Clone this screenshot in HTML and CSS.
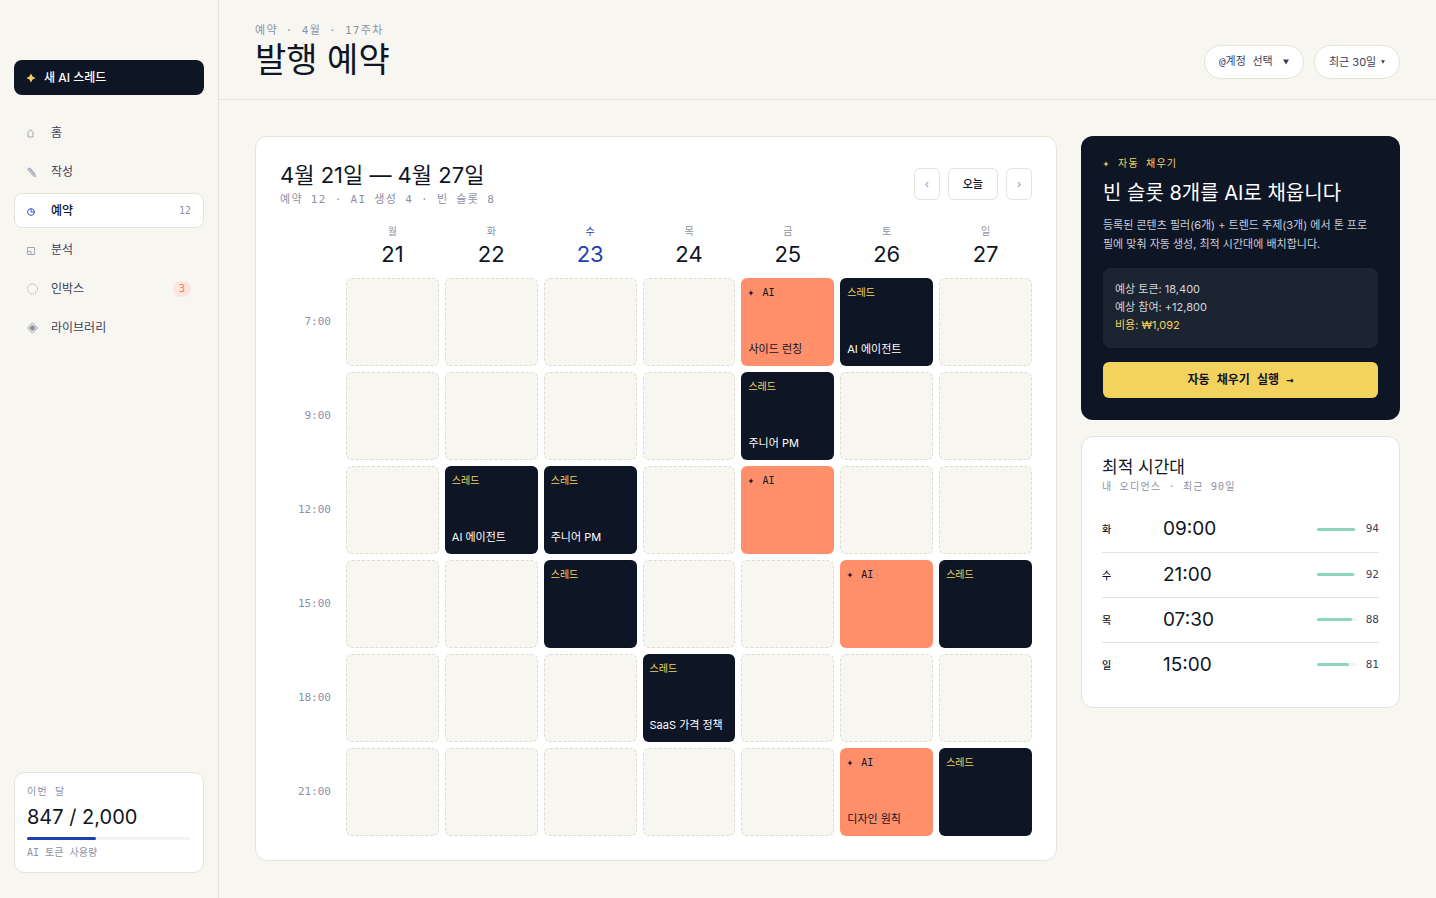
FILE: index.html
```html
<!DOCTYPE html>
<html lang="ko">
<head>
    <meta charset="UTF-8">
    <meta name="viewport" content="width=device-width, initial-scale=1.0">
    <title>발행 예약</title>
    <link rel="stylesheet" href="styles.css">
</head>
<body>
    <aside class="sidebar">
        <button class="new-thread">
            <svg class="spark" viewBox="0 0 12 12"><path d="M6 0.5 7.9 4.1 11.5 6 7.9 7.9 6 11.5 4.1 7.9 0.5 6 4.1 4.1Z"/></svg>
            새 AI 스레드
        </button>
        <nav class="nav">
            <a href="#" class="nav-item">
                <svg class="nav-icon" viewBox="0 0 12 12"><path d="M1 10V5.500L3.500 2.500 6 5.500V10Z"/></svg>
                <span>홈</span>
            </a>
            <a href="#" class="nav-item">
                <svg class="nav-icon" viewBox="0 0 12 12"><path d="M1 2.500 3 2 8 8 8.500 10.500 6 9.700 1.200 4ZM2 3.200 7 9M3 2.800 7.600 8.400"/></svg>
                <span>작성</span>
            </a>
            <a href="#" class="nav-item active">
                <svg class="nav-icon" viewBox="0 0 12 12"><circle cx="4" cy="7" r="3.400"/><path d="M4 3.600V7H7.400"/></svg>
                <span>예약</span>
                <span class="count">12</span>
            </a>
            <a href="#" class="nav-item">
                <svg class="nav-icon" viewBox="0 0 12 12"><path d="M0.500 3.500H7.500V10.500H0.500ZM0.500 7.500H4V10.500"/></svg>
                <span>분석</span>
            </a>
            <a href="#" class="nav-item">
                <svg class="nav-icon" viewBox="0 0 12 12"><circle class="dotted" cx="5.500" cy="6" r="5"/></svg>
                <span>인박스</span>
                <span class="badge">3</span>
            </a>
            <a href="#" class="nav-item">
                <svg class="nav-icon" viewBox="0 0 12 12"><path d="M5.500 0.800 10.700 6 5.500 11.200 0.500 6Z"/><path class="solid" d="M5.500 3 8.500 6 5.500 9 2.500 6Z"/></svg>
                <span>라이브러리</span>
            </a>
        </nav>
        <div class="usage">
            <p class="usage-label">이번 달</p>
            <p class="usage-value">847 / 2,000</p>
            <div class="bar usage-bar"><div class="bar-fill" style="width: 42%"></div></div>
            <p class="usage-note">AI 토큰 사용량</p>
        </div>
    </aside>

    <main class="main">
        <header class="topbar">
            <div>
                <p class="eyebrow">예약 · 4월 · 17주차</p>
                <h1>발행 예약</h1>
            </div>
            <div class="filters">
                <label class="pill mono">
                    <select aria-label="계정"><option>@계정 선택</option></select>
                    <svg class="caret" viewBox="0 0 6 6"><path d="M0 0.500H6L3 5.500Z"/></svg>
                </label>
                <label class="pill">
                    <select aria-label="기간"><option>최근 30일</option></select>
                    <svg class="caret small" viewBox="0 0 6 6"><path d="M0 0.500H6L3 5.500Z"/></svg>
                </label>
            </div>
        </header>

        <div class="content">
            <section class="card calendar">
                <div class="calendar-head">
                    <div>
                        <h2>4월 21일 — 4월 27일</h2>
                        <p class="eyebrow">예약 12 · AI 생성 4 · 빈 슬롯 8</p>
                    </div>
                    <div class="pager">
                        <button class="arrow" aria-label="이전 주">‹</button>
                        <button class="today">오늘</button>
                        <button class="arrow" aria-label="다음 주">›</button>
                    </div>
                </div>
                <table class="week">
                    <thead>
                        <tr>
                            <td></td>
                            <th>월<b>21</b></th>
                            <th>화<b>22</b></th>
                            <th class="now">수<b>23</b></th>
                            <th>목<b>24</b></th>
                            <th>금<b>25</b></th>
                            <th>토<b>26</b></th>
                            <th>일<b>27</b></th>
                        </tr>
                    </thead>
                    <tbody>
                        <tr>
                            <th>7:00</th>
                            <td></td>
                            <td></td>
                            <td></td>
                            <td></td>
                            <td class="slot ai"><small><svg class="spark" viewBox="0 0 12 12"><path d="M6 0.5 7.6 4.4 11.5 6 7.6 7.6 6 11.5 4.4 7.6 0.5 6 4.4 4.4Z"/></svg>AI</small><span>사이드 런칭</span></td>
                            <td class="slot thread"><small>스레드</small><span>AI 에이전트</span></td>
                            <td></td>
                        </tr>
                        <tr>
                            <th>9:00</th>
                            <td></td>
                            <td></td>
                            <td></td>
                            <td></td>
                            <td class="slot thread"><small>스레드</small><span>주니어 PM</span></td>
                            <td></td>
                            <td></td>
                        </tr>
                        <tr>
                            <th>12:00</th>
                            <td></td>
                            <td class="slot thread"><small>스레드</small><span>AI 에이전트</span></td>
                            <td class="slot thread"><small>스레드</small><span>주니어 PM</span></td>
                            <td></td>
                            <td class="slot ai"><small><svg class="spark" viewBox="0 0 12 12"><path d="M6 0.5 7.6 4.4 11.5 6 7.6 7.6 6 11.5 4.4 7.6 0.5 6 4.4 4.4Z"/></svg>AI</small></td>
                            <td></td>
                            <td></td>
                        </tr>
                        <tr>
                            <th>15:00</th>
                            <td></td>
                            <td></td>
                            <td class="slot thread"><small>스레드</small></td>
                            <td></td>
                            <td></td>
                            <td class="slot ai"><small><svg class="spark" viewBox="0 0 12 12"><path d="M6 0.5 7.6 4.4 11.5 6 7.6 7.6 6 11.5 4.4 7.6 0.5 6 4.4 4.4Z"/></svg>AI</small></td>
                            <td class="slot thread"><small>스레드</small></td>
                        </tr>
                        <tr>
                            <th>18:00</th>
                            <td></td>
                            <td></td>
                            <td></td>
                            <td class="slot thread"><small>스레드</small><span>SaaS 가격 정책</span></td>
                            <td></td>
                            <td></td>
                            <td></td>
                        </tr>
                        <tr>
                            <th>21:00</th>
                            <td></td>
                            <td></td>
                            <td></td>
                            <td></td>
                            <td></td>
                            <td class="slot ai"><small><svg class="spark" viewBox="0 0 12 12"><path d="M6 0.5 7.6 4.4 11.5 6 7.6 7.6 6 11.5 4.4 7.6 0.5 6 4.4 4.4Z"/></svg>AI</small><span>디자인 원칙</span></td>
                            <td class="slot thread"><small>스레드</small></td>
                        </tr>
                    </tbody>
                </table>
            </section>

            <div class="side">
                <section class="autofill">
                    <p class="autofill-label"><svg class="spark" viewBox="0 0 12 12"><path d="M6 0.5 7.6 4.4 11.5 6 7.6 7.6 6 11.5 4.4 7.6 0.5 6 4.4 4.4Z"/></svg>자동 채우기</p>
                    <h2>빈 슬롯 8개를 AI로 채웁니다</h2>
                    <p class="autofill-text">등록된 콘텐츠 필러(6개) + 트렌드 주제(3개) 에서 톤 프로필에 맞춰 자동 생성, 최적 시간대에 배치합니다.</p>
                    <div class="estimate">
                        <p>예상 토큰: 18,400</p>
                        <p>예상 참여: +12,800</p>
                        <p class="cost">비용: ₩1,092</p>
                    </div>
                    <button class="run">자동 채우기 실행 →</button>
                </section>

                <section class="card best">
                    <h3>최적 시간대</h3>
                    <p class="best-note">내 오디언스 · 최근 90일</p>
                    <table class="times">
                        <tr>
                            <th>화</th>
                            <td class="time">09:00</td>
                            <td class="meter"><div class="bar"><div class="bar-fill" style="width: 94%"></div></div></td>
                            <td class="score">94</td>
                        </tr>
                        <tr>
                            <th>수</th>
                            <td class="time">21:00</td>
                            <td class="meter"><div class="bar"><div class="bar-fill" style="width: 92%"></div></div></td>
                            <td class="score">92</td>
                        </tr>
                        <tr>
                            <th>목</th>
                            <td class="time">07:30</td>
                            <td class="meter"><div class="bar"><div class="bar-fill" style="width: 88%"></div></div></td>
                            <td class="score">88</td>
                        </tr>
                        <tr>
                            <th>일</th>
                            <td class="time">15:00</td>
                            <td class="meter"><div class="bar"><div class="bar-fill" style="width: 81%"></div></div></td>
                            <td class="score">81</td>
                        </tr>
                    </table>
                </section>
            </div>
        </div>
    </main>
</body>
</html>
```
FILE: styles.css
```css
:root {
    --bg: #f7f6f1;
    --ink: #0e1525;
    --text: #3c3f5c;
    --muted: #8e90a6;
    --line: #e5e3da;
    --yellow: #f3d35e;
    --coral: #ff8e6b;
    --mint: #8dd6bb;
    --blue: #1e3fae;
    --sans: Inter, "Noto Sans CJK KR", sans-serif;
    --mono: "DejaVu Sans Mono", "Noto Sans CJK KR", monospace;
}
* {
    box-sizing: border-box;
}
body {
    display: flex;
    min-height: 100vh;
    margin: 0;
    background: var(--bg);
    color: var(--ink);
    font: 12px/18px var(--sans);
}
h1, h2, h3, p {
    margin: 0;
    font-weight: 400;
}
button, select {
    font: inherit;
    color: inherit;
    cursor: pointer;
}
a {
    color: inherit;
    text-decoration: none;
}
.spark {
    width: 6px;
    height: 6px;
    fill: currentColor;
}
.card {
    background: #fff;
    border: 1px solid var(--line);
    border-radius: 12px;
}
.bar {
    height: 3px;
    background: #f3f3f1;
    border-radius: 2px;
}
.bar-fill {
    height: 100%;
    background: var(--mint);
    border-radius: 2px;
}
.eyebrow {
    font: 11px/14px var(--mono);
    letter-spacing: 0.12em;
    color: var(--muted);
}

/* sidebar */
.sidebar {
    display: flex;
    flex-direction: column;
    flex: none;
    width: 219px;
    padding: 60px 14px 25px;
    border-right: 1px solid var(--line);
}
.new-thread {
    display: flex;
    align-items: center;
    gap: 8px;
    height: 35px;
    padding: 0 12px;
    background: var(--ink);
    border: 0;
    border-radius: 8px;
    color: #fff;
    font-weight: 500;
}
.new-thread .spark {
    width: 10px;
    height: 10px;
    fill: var(--yellow);
}
.nav {
    display: flex;
    flex-direction: column;
    gap: 4px;
    margin-top: 20px;
}
.nav-item {
    display: flex;
    align-items: center;
    height: 35px;
    padding: 0 12px;
    border: 1px solid transparent;
    border-radius: 8px;
    color: var(--text);
}
.nav-icon {
    width: 12px;
    height: 12px;
    margin-right: 12px;
    fill: none;
    stroke: var(--muted);
    stroke-width: 0.8;
}
.nav-icon .dotted {
    stroke-dasharray: 1 1;
}
.nav-icon .solid {
    fill: var(--muted);
}
.nav-item.active {
    background: #fff;
    border-color: var(--line);
    color: var(--ink);
    font-weight: 500;
}
.active .nav-icon {
    stroke: #4257c4;
    stroke-width: 1;
}
.count {
    margin-left: auto;
    font: 10px/14px var(--mono);
    color: var(--muted);
}
.badge {
    margin-left: auto;
    padding: 0 6px;
    border-radius: 8px;
    background: #fde5dc;
    color: #f4795a;
    font: 10px/16px var(--mono);
}
.usage {
    margin-top: auto;
    padding: 12px;
    background: #fff;
    border: 1px solid var(--line);
    border-radius: 10px;
}
.usage-label, .usage-note {
    font: 10px/14px var(--mono);
    color: var(--muted);
}
.usage-label {
    letter-spacing: 0.12em;
}
.usage-value {
    margin: 4px 0 6px;
    font-size: 20px;
    line-height: 28px;
}
.usage-bar {
    margin-bottom: 6px;
}
.usage-bar .bar-fill {
    background: var(--blue);
}

/* header */
.main {
    flex: 1;
    min-width: 0;
}
.topbar {
    display: flex;
    align-items: flex-end;
    justify-content: space-between;
    padding: 24px 36px 20px;
    border-bottom: 1px solid var(--line);
}
h1 {
    margin-top: 2px;
    font-size: 34px;
    line-height: 39px;
}
.filters {
    display: flex;
    gap: 10px;
}
.pill {
    display: flex;
    align-items: center;
    gap: 4px;
    height: 34px;
    padding: 0 14px;
    background: #fff;
    border: 1px solid var(--line);
    border-radius: 17px;
    color: var(--text);
    font-size: 11px;
}
.pill.mono {
    gap: 10px;
    font-family: var(--mono);
}
.pill select {
    appearance: none;
    padding: 0;
    border: 0;
    background: none;
}
.caret {
    width: 6px;
    height: 6px;
    fill: var(--text);
}
.caret.small {
    width: 4px;
    height: 4px;
}

/* calendar */
.content {
    display: grid;
    grid-template-columns: 1fr 319px;
    align-items: start;
    gap: 24px;
    padding: 36px;
}
.calendar {
    padding: 24px;
}
.calendar-head {
    display: flex;
    align-items: center;
    justify-content: space-between;
    margin-bottom: 18px;
}
.calendar-head h2 {
    margin-bottom: 4px;
    font-size: 22px;
    line-height: 28px;
}
.pager {
    display: flex;
    gap: 8px;
}
.pager button {
    height: 32px;
    padding: 0 9px;
    background: #fff;
    border: 1px solid var(--line);
    border-radius: 6px;
    font-size: 11px;
}
.pager .arrow {
    width: 26px;
    color: var(--muted);
}
.pager .today {
    padding: 0 14px;
    font-weight: 500;
}
.week, .week thead, .week tbody {
    display: grid;
    gap: 6px;
}
.week tr {
    display: grid;
    grid-template-columns: 60px repeat(7, 1fr);
    gap: 6px;
}
.week th, .week td {
    padding: 0;
    font-weight: 400;
}
.week thead th {
    padding-bottom: 3px;
    font: 10px/14px var(--mono);
    color: var(--muted);
}
.week b {
    display: block;
    color: var(--ink);
    font: 22px/30px var(--sans);
}
.week .now, .week .now b {
    color: var(--blue);
}
.week tbody th {
    align-self: center;
    padding-right: 9px;
    text-align: right;
    font: 11px/14px var(--mono);
    color: var(--muted);
}
.week tbody td {
    height: 88px;
    background: var(--bg);
    border: 1px dashed #deddd3;
    border-radius: 6px;
}
.week tbody .slot {
    display: flex;
    flex-direction: column;
    justify-content: space-between;
    padding: 8px 7px;
    border: 0;
    font-size: 11px;
}
.slot small {
    display: flex;
    align-items: center;
    gap: 8px;
    font: 10px/14px var(--mono);
}
.slot span {
    line-height: 18px;
}
.week .thread {
    background: var(--ink);
    color: #fff;
}
.thread small {
    color: var(--yellow);
}
.week .ai {
    background: var(--coral);
}

/* right column */
.side {
    display: grid;
    gap: 16px;
}
.autofill {
    padding: 22px;
    background: var(--ink);
    border-radius: 12px;
    color: #fff;
}
.autofill-label {
    display: flex;
    align-items: center;
    gap: 9px;
    font: 10px/12px var(--mono);
    letter-spacing: 0.12em;
    color: var(--yellow);
}
.autofill h2 {
    margin: 8px 0;
    font-size: 20px;
    line-height: 30px;
}
.autofill-text {
    padding-right: 4px;
    font-size: 11px;
    line-height: 19px;
    color: #c9ccd6;
}
.estimate {
    margin: 14px 0;
    padding: 12px 12px 14px;
    background: #1d2431;
    border-radius: 8px;
    font-size: 11px;
    color: #d3d6de;
}
.estimate .cost {
    color: var(--yellow);
}
.run {
    display: block;
    width: 100%;
    height: 36px;
    background: var(--yellow);
    border: 0;
    border-radius: 6px;
    color: var(--ink);
    font: 700 12px/18px var(--mono);
}
.best {
    padding: 20px;
}
.best h3 {
    font-size: 17px;
    line-height: 20px;
}
.best-note {
    font: 10px/20px var(--mono);
    letter-spacing: 0.12em;
    color: var(--muted);
}
.times {
    width: 100%;
    margin-top: 10px;
    border-collapse: collapse;
}
.times tr + tr {
    border-top: 1px solid var(--line);
}
.times th, .times td {
    height: 45px;
    padding: 0;
    text-align: left;
}
.times th {
    width: 61px;
    font-size: 10px;
    font-weight: 500;
}
.times .time {
    font-size: 19px;
}
.times .meter {
    width: 40px;
}
.times .score {
    width: 22px;
    text-align: right;
    font: 11px/14px var(--mono);
    color: var(--text);
}
```
